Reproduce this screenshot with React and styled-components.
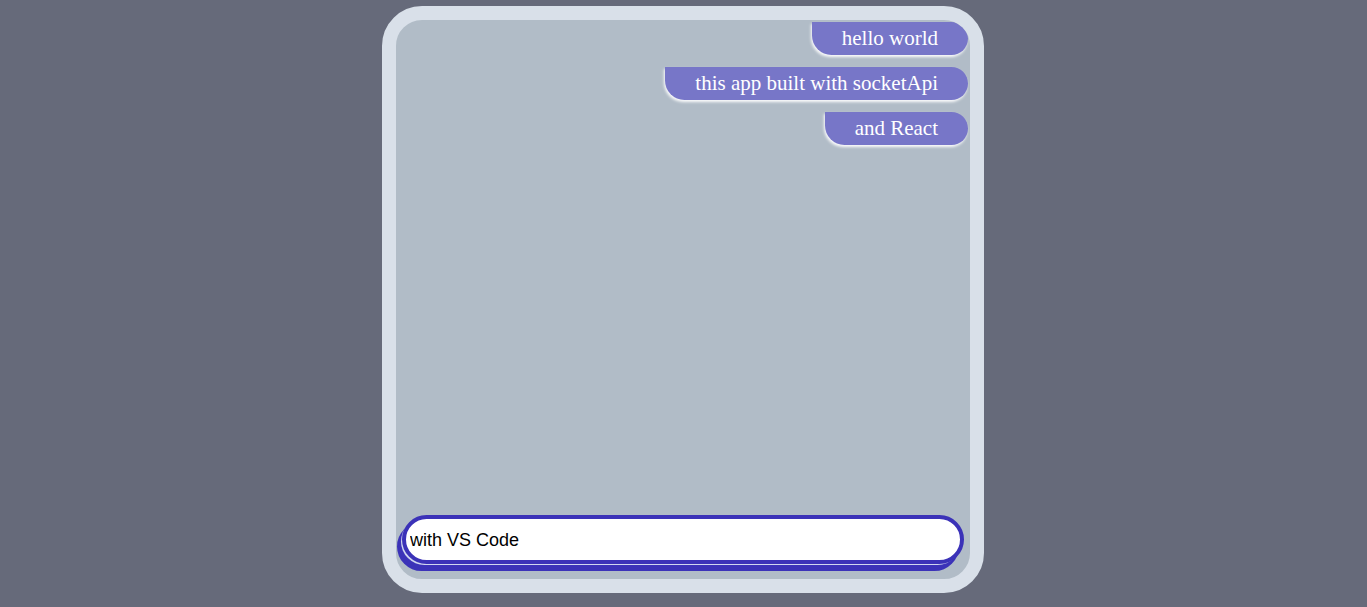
import React from "react";
import styled, { createGlobalStyle } from "styled-components";

const Global = createGlobalStyle`
  html, body { margin: 0; padding: 0; }
  body {
    background: #666a7a;
    height: 607px;
    overflow: hidden;
    font-family: "Liberation Serif", serif;
  }
`;

const Page = styled.div`
  display: flex;
  justify-content: center;
  padding: 6px 1px 0 0;
`;

const Card = styled.div`
  width: 574px;
  height: 559px;
  border: 14px solid #d9e0e9;
  border-radius: 40px;
  background: #b1bcc7;
  display: flex;
  flex-direction: column;
  overflow: hidden;
`;

const Messages = styled.ul`
  list-style: none;
  margin: 0;
  padding: 2px 2px 0 0;
  flex: 1;
  display: flex;
  flex-direction: column;
  align-items: flex-end;
  gap: 12px;
`;

const Bubble = styled.li`
  background: #7776c8;
  color: #ffffff;
  font-family: "Liberation Serif", "DejaVu Serif", serif;
  font-size: 21px;
  line-height: 33px;
  height: 33px;
  padding: 0 30px;
  border-radius: 0 17px 17px 20px;
  box-shadow: -1px 2px 3px rgba(255, 255, 255, 0.95);
  white-space: nowrap;
`;

const Form = styled.form`
  padding: 0 6px 15px 6px;
`;

const Input = styled.input`
  box-sizing: border-box;
  width: 100%;
  height: 49px;
  border: 4px solid #3b32b8;
  border-radius: 25px;
  background: #ffffff;
  padding: 1px 4px 0;
  font-family: "Liberation Sans", Arial, sans-serif;
  font-size: 18px;
  color: #000;
  outline: none;
  box-shadow: -2px 2px 0 -1px rgba(225, 232, 245, 0.9), -5px 7px 0 0 #3b32b8;
`;

const messages = ["hello world", "this app built with socketApi", "and React"];

export default function App() {
  return (
    <>
      <Global />
      <Page>
        <Card>
          <Messages>
            {messages.map((m) => (
              <Bubble key={m}>{m}</Bubble>
            ))}
          </Messages>
          <Form onSubmit={(e) => e.preventDefault()}>
            <Input defaultValue="with VS Code" />
          </Form>
        </Card>
      </Page>
    </>
  );
}
